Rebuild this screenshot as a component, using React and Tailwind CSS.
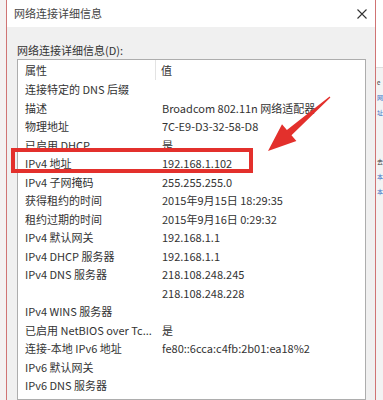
import React from "react";

const rows = [
  ["连接特定的 DNS 后缀", ""],
  ["描述", "Broadcom 802.11n 网络适配器"],
  ["物理地址", "7C-E9-D3-32-58-D8"],
  ["已启用 DHCP", "是"],
  ["IPv4 地址", "192.168.1.102"],
  ["IPv4 子网掩码", "255.255.255.0"],
  ["获得租约的时间", "2015年9月15日 18:29:35"],
  ["租约过期的时间", "2015年9月16日 0:29:32"],
  ["IPv4 默认网关", "192.168.1.1"],
  ["IPv4 DHCP 服务器", "192.168.1.1"],
  ["IPv4 DNS 服务器", "218.108.248.245"],
  ["", "218.108.248.228"],
  ["IPv4 WINS 服务器", ""],
  ["已启用 NetBIOS over Tc...", "是"],
  ["连接-本地 IPv6 地址", "fe80::6cca:c4fb:2b01:ea18%2"],
  ["IPv6 默认网关", ""],
  ["IPv6 DNS 服务器", ""],
];

export default function App() {
  return (
    <div className="relative w-[383px] h-[400px] overflow-hidden flex bg-[#f2f2f2] font-['Noto_Sans_CJK_SC',sans-serif] text-[11px] text-[#333]">
      {/* left strip */}
      <div className="w-[6px] shrink-0 bg-[#f4f1f1]" />
      {/* window */}
      <div className="w-[370px] shrink-0 flex flex-col border-x border-[#d07474] bg-[#f0f0f0]">
        <div className="h-[27px] shrink-0 bg-white flex items-center justify-between pl-[7px] pr-[7px]">
          <span className="text-[#444] leading-none">网络连接详细信息</span>
          <svg width="10" height="10" viewBox="0 0 10 10" className="mr-[1px]">
            <path d="M0.5 0.5 L9.5 9.5 M9.5 0.5 L0.5 9.5" stroke="#333" strokeWidth="1.1" />
          </svg>
        </div>
        <div className="flex-1 flex flex-col pl-[10px] pr-[9px] pt-[15px] min-h-0">
          <div className="leading-[16px] h-[16px]">网络连接详细信息(D):</div>
          <div className="mt-[1px] flex-1 bg-white border border-[#adadad] min-h-0 overflow-hidden">
            <div className="flex h-[20px] items-center">
              <div className="w-[138px] h-full flex items-center pl-[7px] border-r border-[#e3e3e3]">属性</div>
              <div className="pl-[5px]">值</div>
            </div>
            {rows.map(([k, v], i) => (
              <div key={i} className="flex h-[18.5px] items-center whitespace-nowrap">
                <div className="w-[139px] pl-[7px]">{k}</div>
                <div className="pl-[5px]">{v}</div>
              </div>
            ))}
          </div>
        </div>
      </div>
      {/* right strip - background window */}
      <div className="flex-1 flex flex-col bg-[#f3f3f3] overflow-hidden">
        <div className="h-[68px] shrink-0 bg-white border-b border-[#dedede]" />
        <div className="pl-[1px] whitespace-nowrap text-[6px] leading-[15px]">
          <div className="mt-[7px] text-[#333]">e</div>
          <div className="text-[#3a6fc4]">网</div>
          <div className="text-[#3a6fc4]">址</div>
          <div className="mt-[34px] text-[#333]">去</div>
          <div className="text-[#3a6fc4]">本</div>
          <div className="text-[#3a6fc4]">本</div>
        </div>
      </div>
      {/* annotation: red box */}
      <div className="absolute left-[11px] top-[148px] w-[242px] h-[25px] border-[4px] border-[#e3302c]" />
      {/* annotation: arrow */}
      <svg className="absolute left-0 top-0" width="383" height="400" viewBox="0 0 383 400">
        <polygon
          points="330.4,97.5 291.5,135.2 296.4,140.9 268,151 282,124.3 286.9,129.9 329.6,96.5"
          fill="#e3302c"
        />
      </svg>
    </div>
  );
}
